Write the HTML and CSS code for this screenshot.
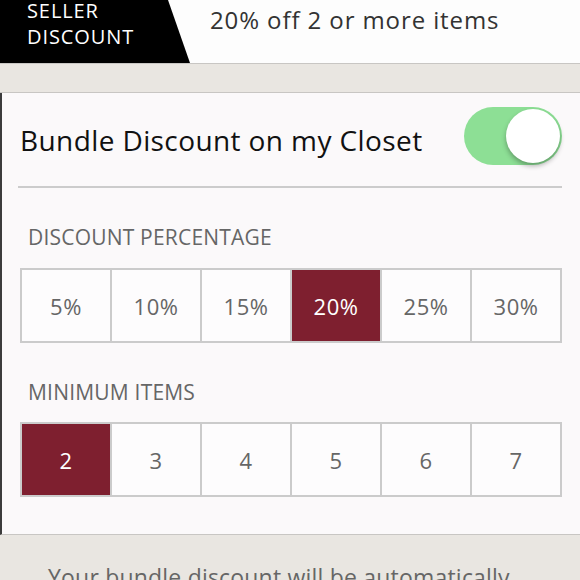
FILE: index.html
```html
<!DOCTYPE html>
<html>
<head>
    <title>Bundle Discount</title>
    <link rel="stylesheet" href="styles.css">
</head>
<body>
    <div class="top">
        <div class="tag"><div class="tag-text">SELLER<br>DISCOUNT</div></div>
        <div class="summary">20% off 2 or more items</div>
    </div>
    <div class="band"></div>

    <div class="panel">
        <div class="toggle-row">
            <span class="toggle-label">Bundle Discount on my Closet</span>
            <div class="toggle"><div class="knob"></div></div>
        </div>

        <div class="section-label">DISCOUNT PERCENTAGE</div>
        <div class="choices">
            <div class="choice">5%</div>
            <div class="choice">10%</div>
            <div class="choice">15%</div>
            <div class="choice selected">20%</div>
            <div class="choice">25%</div>
            <div class="choice">30%</div>
        </div>

        <div class="section-label">MINIMUM ITEMS</div>
        <div class="choices">
            <div class="choice selected">2</div>
            <div class="choice">3</div>
            <div class="choice">4</div>
            <div class="choice">5</div>
            <div class="choice">6</div>
            <div class="choice">7</div>
        </div>
    </div>

    <div class="note">Your bundle discount will be automatically applied to orders of the selected size.</div>
</body>
</html>
```

FILE: styles.css
```css
body {
    font-family: "Open Sans", Lato, sans-serif;
    background-color: #e9e6e1;
    margin: 0;
    padding: 0;
    overflow: hidden;
}

.top {
    display: flex;
    align-items: flex-start;
    height: 63px;
    background-color: #fdfdfd;
    border-bottom: 1px solid #c8c6c3;
}

.tag {
    width: 190px;
    height: 63px;
    flex-shrink: 0;
    background-color: #000000;
    clip-path: polygon(0 0, 168px 0, 190px 100%, 0 100%);
}

.tag-text {
    margin-top: -2px;
    padding-left: 27px;
    color: #ffffff;
    font-size: 20px;
    line-height: 26px;
    letter-spacing: 0.9px;
}

.summary {
    margin-left: 20px;
    padding-top: 3px;
    font-size: 24px;
    line-height: 34px;
    letter-spacing: 0.9px;
    color: #333333;
}

.band {
    height: 28px;
    background-color: #e9e6e1;
    border-bottom: 1px solid #c8c6c3;
}

.panel {
    background-color: #fbf9fa;
    padding: 0 18px 37px 18px;
    border-left: 2px solid #3c3c3c;
    border-bottom: 1px solid #c8c6c3;
}

.toggle-row {
    display: flex;
    align-items: center;
    justify-content: space-between;
    height: 93px;
    border-bottom: 2px solid #cccccc;
    margin-left: -2px;
}

.toggle-label {
    padding-left: 2px;
    font-size: 28px;
    letter-spacing: 0.4px;
    color: #111111;
}

.toggle {
    display: flex;
    justify-content: flex-end;
    align-items: center;
    width: 98px;
    height: 58px;
    box-sizing: border-box;
    padding: 2px;
    border-radius: 29px;
    background-color: #8ddf95;
    margin-top: -7px;
}

.knob {
    width: 54px;
    height: 54px;
    border-radius: 50%;
    background-color: #ffffff;
    box-shadow: 0 3px 5px rgba(0, 0, 0, 0.3);
}

.section-label {
    margin: 35px 0 17px 8px;
    font-size: 21px;
    line-height: 28px;
    letter-spacing: 0.2px;
    color: #666666;
}

.choices + .section-label {
    margin-bottom: 16px;
}

.choices {
    display: grid;
    grid-template-columns: repeat(6, 1fr);
    gap: 2px;
    padding: 2px;
    height: 75px;
    box-sizing: border-box;
    background-color: #cbcbcb;
}

.choice {
    display: flex;
    align-items: center;
    justify-content: center;
    background-color: #fdfcfd;
    font-size: 22px;
    letter-spacing: 0.5px;
    color: #666666;
}

.choice.selected {
    background-color: #7e1f2f;
    color: #ffffff;
}

.note {
    padding: 27px 40px 0 48px;
    font-size: 23px;
    line-height: 30px;
    letter-spacing: 0.2px;
    color: #666666;
}
```
